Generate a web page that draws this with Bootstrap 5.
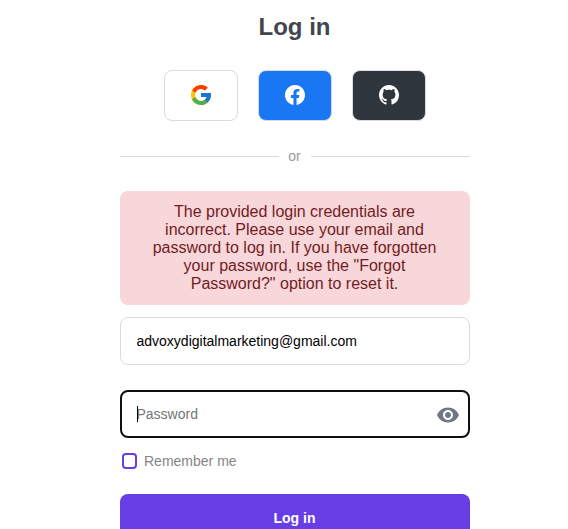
<!DOCTYPE html>
<html lang="en">
<head>
<meta charset="utf-8">
<meta name="viewport" content="width=device-width, initial-scale=1">
<title>Log in</title>
<link href="https://cdn.jsdelivr.net/npm/bootstrap@5.3.0/dist/css/bootstrap.min.css" rel="stylesheet">
<style>
body { font-family: "Liberation Sans", Arial, sans-serif; font-size: 14px; background: #fff; height: 529px; overflow: hidden; }
.login-panel { width: 350px; margin-left: 119.5px; padding-top: 13px; }
.login-title { font-size: 24px; line-height: 28px; color: #43454e; margin-bottom: 29px; }
.social-row { gap: 20px; }
.btn-social { width: 74px; height: 51px; padding: 0 0 1px; border: 1px solid #dadbdd; border-radius: 8px; }
.btn-facebook, .btn-facebook:hover { background: #1977f3; }
.btn-github, .btn-github:hover { background: #2f363d; }
.divider { margin-top: 26px; height: 18px; line-height: 18px; color: #999; }
.divider-line { height: 1px; background: #d9d9de; }
.divider-text { width: 32px; text-align: center; }
.login-error { margin: 26px 0 12px; padding: 12px 30px; line-height: 18px; font-size: 16px; border: 0; border-radius: 8px; background: #f8d7da; color: #721c24; }
.login-field { height: 48px; padding: 0 15px 0 16px; font-size: 14px; border: 1px solid #dadbdd; border-radius: 8px; color: #000; }
.login-field:focus { box-shadow: none; }
.password-box { margin-top: 25px; }
.password-box .login-field { border: 2px solid #0f0f0f; padding-left: 15px; }
.login-field::placeholder { color: #757575; }
.text-caret { position: absolute; left: 17px; top: 16px; width: 1px; height: 16px; background: #000; }
.toggle-eye { position: absolute; right: 10px; top: 13px; }
.remember { margin: 15px 0 0 2px; height: 16px; color: #858585; gap: 7.5px; }
.remember .form-check-input { width: 15px; height: 16px; margin: 0; border: 2px solid #683fe4; border-radius: 4px; }
.btn-login, .btn-login:hover { margin-top: 25px; height: 48px; font-size: 14px; padding: 0; border: 0; border-radius: 8px; background: #673de6; color: #fff; }
</style>
</head>
<body>
<main class="login-panel">
  <h1 class="login-title fw-bold text-center">Log in</h1>
  <div class="social-row d-flex justify-content-center">
    <button type="button" class="btn btn-social d-flex align-items-center justify-content-center bg-white" aria-label="Google">
      <svg width="24" height="24" viewBox="0 0 48 48"><path fill="#FFC107" d="M43.611 20.083H42V20H24v8h11.303c-1.649 4.657-6.08 8-11.303 8-6.627 0-12-5.373-12-12s5.373-12 12-12c3.059 0 5.842 1.154 7.961 3.039l5.657-5.657C34.046 6.053 29.268 4 24 4 12.955 4 4 12.955 4 24s8.955 20 20 20 20-8.955 20-20c0-1.341-.138-2.65-.389-3.917z"/><path fill="#FF3D00" d="M6.306 14.691l6.571 4.819C14.655 15.108 18.961 12 24 12c3.059 0 5.842 1.154 7.961 3.039l5.657-5.657C34.046 6.053 29.268 4 24 4 16.318 4 9.656 8.337 6.306 14.691z"/><path fill="#4CAF50" d="M24 44c5.166 0 9.86-1.977 13.409-5.192l-6.19-5.238C29.211 35.091 26.715 36 24 36c-5.202 0-9.619-3.317-11.283-7.946l-6.522 5.025C9.505 39.556 16.227 44 24 44z"/><path fill="#1976D2" d="M43.611 20.083H42V20H24v8h11.303c-.792 2.237-2.231 4.166-4.087 5.571l.003-.002 6.19 5.238C36.971 39.205 44 34 44 24c0-1.341-.138-2.65-.389-3.917z"/></svg>
    </button>
    <button type="button" class="btn btn-social btn-facebook d-flex align-items-center justify-content-center" aria-label="Facebook">
      <svg width="20" height="20" viewBox="0 0 16 16" fill="#fff"><path d="M16 8.049c0-4.446-3.582-8.05-8-8.05C3.58 0-.002 3.603-.002 8.05c0 4.017 2.926 7.347 6.75 7.951v-5.625h-2.03V8.05H6.75V6.275c0-2.017 1.195-3.131 3.022-3.131.876 0 1.791.157 1.791.157v1.98h-1.009c-.993 0-1.303.621-1.303 1.258v1.51h2.218l-.354 2.326H9.25V16c3.824-.604 6.75-3.934 6.75-7.951z"/></svg>
    </button>
    <button type="button" class="btn btn-social btn-github d-flex align-items-center justify-content-center" aria-label="GitHub">
      <svg width="20" height="20" viewBox="0 0 16 16" fill="#fff"><path d="M8 0C3.58 0 0 3.58 0 8c0 3.54 2.29 6.53 5.47 7.59.4.07.55-.17.55-.38 0-.19-.01-.82-.01-1.49-2.01.37-2.53-.49-2.69-.94-.09-.23-.48-.94-.82-1.13-.28-.15-.68-.52-.01-.53.63-.01 1.08.58 1.23.82.72 1.21 1.87.87 2.33.66.07-.52.28-.87.51-1.07-1.78-.2-3.64-.89-3.64-3.95 0-.87.31-1.59.82-2.15-.08-.2-.36-1.02.08-2.12 0 0 .67-.21 2.2.82.64-.18 1.32-.27 2-.27s1.36.09 2 .27c1.53-1.04 2.2-.82 2.2-.82.44 1.1.16 1.92.08 2.12.51.56.82 1.27.82 2.15 0 3.07-1.87 3.75-3.65 3.95.29.25.54.73.54 1.48 0 1.07-.01 1.93-.01 2.2 0 .21.15.46.55.38A8.01 8.01 0 0 0 16 8c0-4.42-3.58-8-8-8z"/></svg>
    </button>
  </div>
  <div class="divider d-flex align-items-center">
    <span class="divider-line flex-fill"></span><span class="divider-text">or</span><span class="divider-line flex-fill"></span>
  </div>
  <div class="alert login-error text-center" role="alert">The provided login credentials are incorrect. Please use your email and password to log in. If you have forgotten your password, use the "Forgot Password?" option to reset it.</div>
  <form>
    <input type="email" class="form-control login-field" value="advoxydigitalmarketing@gmail.com" aria-label="Email">
    <div class="password-box position-relative">
      <input type="password" class="form-control login-field" placeholder="Password" aria-label="Password">
      <span class="text-caret"></span>
      <svg class="toggle-eye" width="24" height="24" viewBox="0 0 24 24" fill="#727586"><path d="M12 4.5C7 4.5 2.730 7.610 1 12c1.730 4.390 6 7.500 11 7.500s9.270-3.110 11-7.500c-1.730-4.390-6-7.500-11-7.500zM12 17c-2.760 0-5-2.240-5-5s2.240-5 5-5 5 2.240 5 5-2.240 5-5 5zm0-8c-1.660 0-3 1.340-3 3s1.340 3 3 3 3-1.340 3-3-1.340-3-3-3z"/></svg>
    </div>
    <div class="remember d-flex align-items-center">
      <input class="form-check-input" type="checkbox" id="remember">
      <label for="remember">Remember me</label>
    </div>
    <button type="button" class="btn btn-login w-100 fw-bold">Log in</button>
  </form>
</main>
<script src="https://cdn.jsdelivr.net/npm/bootstrap@5.3.0/dist/js/bootstrap.bundle.min.js"></script>
</body>
</html>
